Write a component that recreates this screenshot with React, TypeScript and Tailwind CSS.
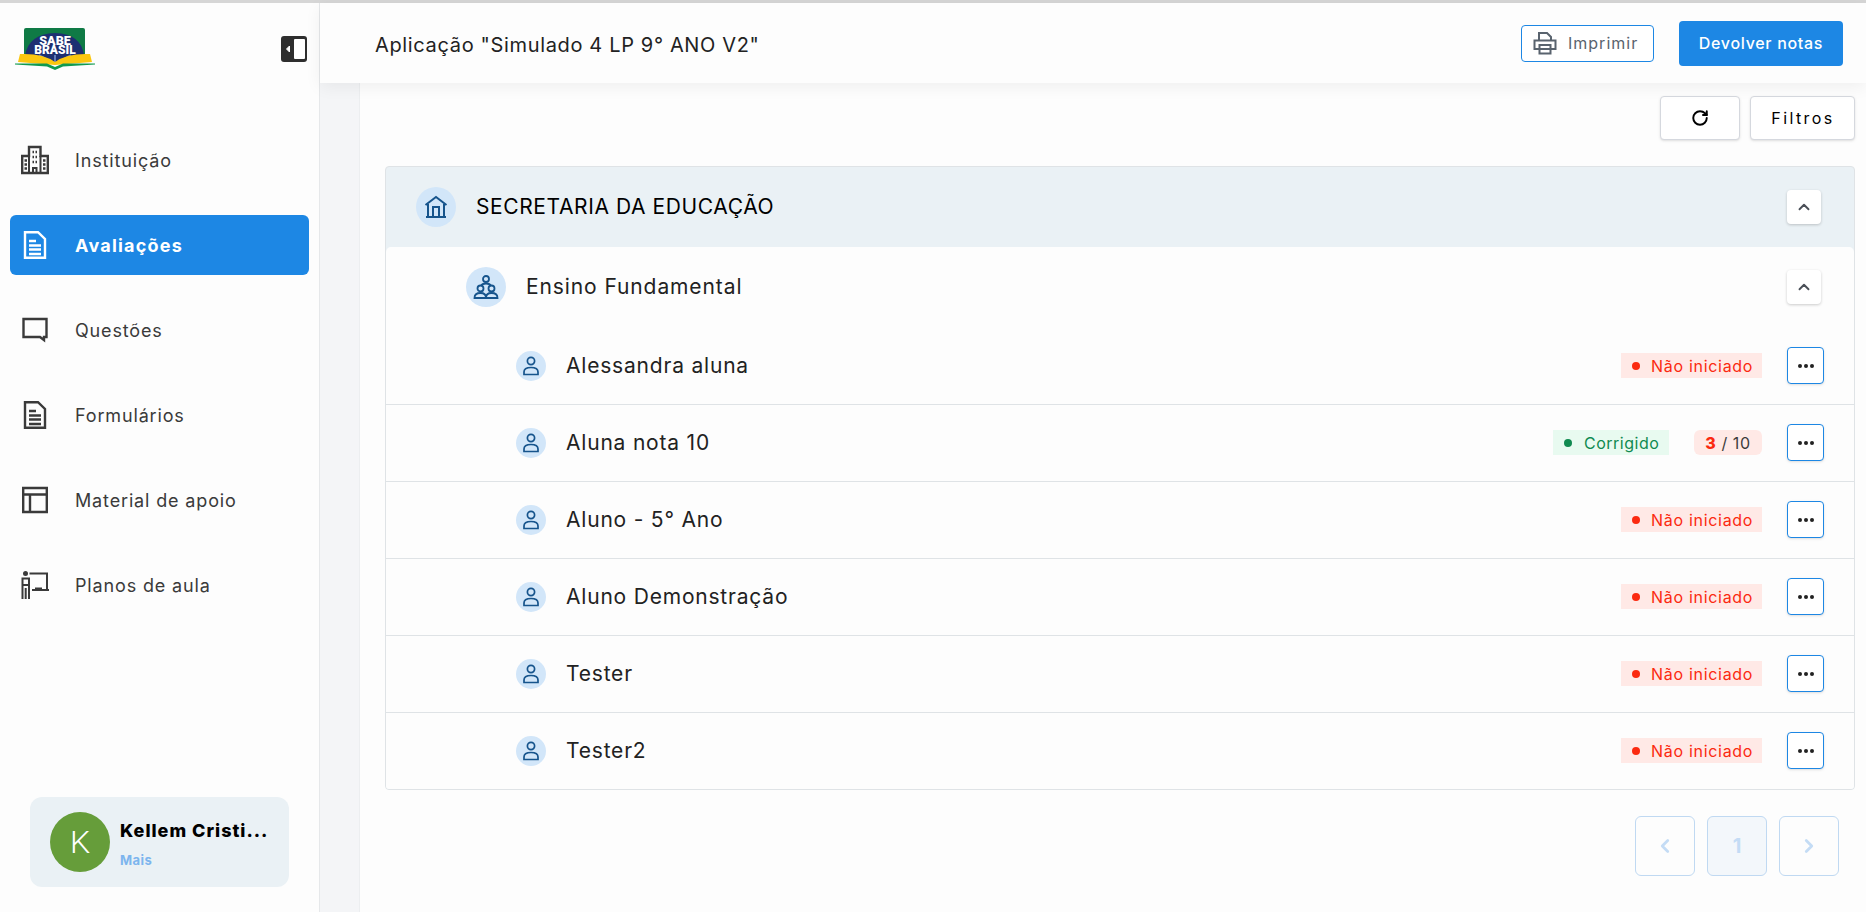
import { ChevronLeft, ChevronRight, ChevronUp, RotateCw } from "lucide-react";

function Logo() {
  return (
    <svg width="80" height="42" viewBox="0 0 80 42">
      <path d="M9 2 Q9 0 11 0 H68 Q70 0 70 2 V28 H9 Z" fill="#0f7a45" />
      <path d="M10 28 Q13 6 40 5 Q67 6 69 28 L40 35 Z" fill="#1d2f72" />
      <path d="M40 36 L24 27 M40 36 L56 27 M40 36 V27" stroke="#5f79b8" strokeWidth="2" />
      <text textAnchor="middle" fontFamily="Roboto, sans-serif" fontWeight="900" fontSize="12.5" fill="#fff">
        <tspan x="40" y="17">SABE</tspan>
        <tspan x="40" y="26" fontSize="12">BRASIL</tspan>
      </text>
      <path d="M3 34 L5 26 Q28 25 40 34 Q52 25 75 26 L77 34 L40 37 Z" fill="#fbc70f" />
      <path d="M0 35.5 L32 35.5 L40 39 L48 35.5 L80 35.5 L80 36.5 L48 38.5 L40 42 L32 38.5 L0 36.5 Z" fill="#109a4f" />
    </svg>
  );
}

function SidebarToggle() {
  return (
    <svg width="26" height="26" viewBox="0 0 26 26">
      <rect width="26" height="26" rx="3" fill="#2e2e2e" />
      <rect x="13" y="3" width="11" height="20" rx="1" fill="#fff" />
      <path d="M8.5 10 L5.5 13 L8.5 16 Z" fill="#fff" stroke="#fff" strokeWidth="1" />
    </svg>
  );
}

function NavIcon({ name }: { name: string }) {
  const common = { width: 30, height: 30, viewBox: "0 0 30 30", fill: "none", stroke: "currentColor", strokeWidth: 2.4 };
  if (name === "building") {
    return (
      <svg {...common}>
        <path d="M2.2 28 V11 H9 V2 H20.5 V11 H27.8 V28 Z" />
        <path d="M9 11 V28 M20.5 11 V28 M13 28 V23 H16.5 V28" strokeWidth="2" />
        <path d="M4.5 15.5 H7 M4.5 19.5 H7 M4.5 23.5 H7 M23 15.5 H25.5 M23 19.5 H25.5 M23 23.5 H25.5 M12.5 7 H14 M15.5 7 H17 M12.5 12 H14 M15.5 12 H17 M12.5 17 H14 M15.5 17 H17" />
      </svg>
    );
  }
  if (name === "doc") {
    return (
      <svg {...common}>
        <path d="M5 2.2 H18 L25 9 V27.8 H5 Z" />
        <path d="M9 11 H16 M9 15.5 H21 M9 19.5 H21 M9 24 H21" />
      </svg>
    );
  }
  if (name === "chat") {
    return (
      <svg {...common}>
        <path d="M3.5 4 H26.5 V22 H24 V25 L20 22 H3.5 Z" />
      </svg>
    );
  }
  if (name === "layout") {
    return (
      <svg {...common}>
        <path d="M3.2 3 H26.8 V27 H3.2 Z M3.2 9.5 H26.8 M10 9.5 V27" />
      </svg>
    );
  }
  return (
    <svg {...common} strokeWidth={2}>
      <circle cx="5.5" cy="3.5" r="2.5" fill="currentColor" stroke="none" />
      <path d="M2.5 29 V8.5 H9 V29 M5.7 18 V29 M2.5 15 H9" />
      <path d="M9.5 3.5 H27 V20 M29 20 H12" />
      <path d="M15 18.5 H22" />
    </svg>
  );
}

function HomeIcon() {
  return (
    <svg width="24" height="24" viewBox="0 0 24 24" fill="none" stroke="#16548c" strokeWidth="2">
      <path d="M1.5 10 L12 2 L22.5 10 M4 9 V22 H20 V9 M9 22 V12 H15 V22 M2 22 H22" />
    </svg>
  );
}

function GroupIcon() {
  return (
    <svg width="26" height="26" viewBox="0 0 26 26" fill="none" stroke="#16548c" strokeWidth="1.8">
      <circle cx="13" cy="5" r="3" />
      <path d="M8 12 Q9 9.5 13 9.5 Q17 9.5 18 12" />
      <circle cx="7.5" cy="14.5" r="3" />
      <circle cx="18.5" cy="14.5" r="3" />
      <path d="M1.5 24 Q1.5 19 7.5 19 Q13 19 13 24 Z M13 24 Q13 19 18.5 19 Q24.5 19 24.5 24 Z" />
    </svg>
  );
}

function PersonIcon() {
  return (
    <svg width="18" height="20" viewBox="0 0 18 20" fill="none" stroke="#16548c" strokeWidth="1.7">
      <circle cx="9" cy="5" r="3.6" />
      <path d="M2 18.5 V16 Q2 11.5 9 11.5 Q16 11.5 16 16 V18.5 Z" />
    </svg>
  );
}

function PrinterIcon() {
  return (
    <svg width="24" height="24" viewBox="0 0 24 24" fill="none" stroke="#59636e" strokeWidth="2">
      <path d="M6 9 V2 H14 L18 6 V9" />
      <path d="M6 18 H1.5 V9.5 H22.5 V18 H18" />
      <path d="M6.5 14 H17.5 V22.5 H6.5 Z M6.5 18 H17.5" />
    </svg>
  );
}

function StatusBadge({ done }: { done?: boolean }) {
  if (done) {
    return (
      <span className="flex h-[25px] w-[116px] items-center bg-[#e8faf0] pl-[11px] text-[16px] tracking-[0.5px] text-[#108a50]">
        <span className="mr-[12px] h-2 w-2 rounded-full bg-[#108a50]" />
        Corrigido
      </span>
    );
  }
  return (
    <span className="flex h-[25px] w-[141px] items-center bg-[#ffe9e6] pl-[11px] text-[16px] tracking-[0.7px] text-[#fb2a10]">
      <span className="mr-[11px] h-2 w-2 rounded-full bg-[#fb2a10]" />
      Não iniciado
    </span>
  );
}

function StudentRow({ name, score, last }: { name: string; score?: boolean; last?: boolean }) {
  return (
    <div className={`flex items-center pb-[1px] pl-[130px] pr-[30px] ${last ? "h-[76px]" : "h-[77px] border-b border-[#dfe3e6]"}`}>
      <span className="flex h-[30px] w-[30px] items-center justify-center rounded-full bg-[#d2e6f9]">
        <PersonIcon />
      </span>
      <span className="ml-5 flex-1 text-[21px] tracking-[0.8px] text-[#222222]">{name}</span>
      <StatusBadge done={score} />
      {score && (
        <span className="ml-[25px] flex h-[25px] w-[68px] items-center justify-center rounded-md bg-[#ffe9e6] text-[16px] tracking-[0.6px] text-[#3c3c3c]">
          <b className="mr-[5px] font-extrabold text-[#fb2a10]">3</b>/ 10
        </span>
      )}
      <button className="ml-[25px] flex h-[37px] w-[37px] items-center justify-center rounded-[4px] border border-[#1d87e4] bg-white shadow-sm">
        <span className="flex gap-[2px]">
          <i className="h-1 w-1 rounded-full bg-[#222222]" />
          <i className="h-1 w-1 rounded-full bg-[#222222]" />
          <i className="h-1 w-1 rounded-full bg-[#222222]" />
        </span>
      </button>
    </div>
  );
}

function CollapseButton() {
  return (
    <button className="flex h-[34px] w-[34px] items-center justify-center rounded-[4px] bg-white shadow-[0_1px_3px_rgba(0,0,0,0.2)]">
      <ChevronUp size={18} strokeWidth={2.5} className="text-[#4a4f57]" />
    </button>
  );
}

const navItems = [
  { label: "Instituição", icon: "building" },
  { label: "Avaliações", icon: "doc", active: true },
  { label: "Questões", icon: "chat" },
  { label: "Formulários", icon: "doc" },
  { label: "Material de apoio", icon: "layout" },
  { label: "Planos de aula", icon: "teacher" },
];

const students = ["Alessandra aluna", "Aluna nota 10", "Aluno - 5° Ano", "Aluno Demonstração", "Tester", "Tester2"];

export default function App() {
  return (
    <div className="flex h-[912px] flex-col overflow-hidden bg-[#fdfdfd] font-['Inter',sans-serif] text-[#222222]">
      <div className="h-[3px] bg-[#d6d6d6]" />
      <div className="flex min-h-0 flex-1">
        <aside className="flex w-[320px] shrink-0 flex-col border-r border-[#e6e8ea] bg-[#fdfdfd]">
          <div className="flex h-[68px] items-start justify-between pl-[15px] pr-[12px] pt-[25px]">
            <Logo />
            <div className="pt-[8px]">
              <SidebarToggle />
            </div>
          </div>
          <nav className="mt-[59px] flex flex-col gap-[25px] px-[10px]">
            {navItems.map((item) => (
              <a
                key={item.label}
                className={`flex h-[60px] items-center rounded-md pl-[10px] text-[18px] ${
                  item.active ? "bg-[#1d87e4] font-bold tracking-[1.2px] text-white" : "tracking-[0.85px] text-[#3a3a3a]"
                }`}
              >
                <NavIcon name={item.icon} />
                <span className="ml-[25px]">{item.label}</span>
              </a>
            ))}
          </nav>
          <div className="mt-auto mb-[25px] ml-[30px] flex h-[90px] w-[259px] items-center rounded-xl bg-[#eaf1f5] pl-5">
            <span className="flex h-[60px] w-[60px] items-center justify-center rounded-full bg-[#669d3a] font-['Roboto',sans-serif] text-[32px] font-light text-white">
              K
            </span>
            <div className="ml-[10px] pt-[4px]">
              <div className="whitespace-nowrap text-[18px] font-extrabold tracking-[1px] text-black">Kellem Cristi...</div>
              <div className="mt-[7px] text-[13px] font-bold tracking-[0.4px] text-[#7cb5ee]">Mais</div>
            </div>
          </div>
        </aside>

        <div className="flex min-w-0 flex-1 flex-col">
          <header className="relative z-10 flex h-[80px] shrink-0 items-center bg-[#fdfdfd] pl-[55px] pr-[23px] shadow-[0_4px_16px_rgba(0,0,0,0.06)]">
            <h1 className="flex-1 pt-[3px] text-[20px] font-normal tracking-[0.65px] text-[#222222]">Aplicação "Simulado 4 LP 9° ANO V2"</h1>
            <button className="flex h-[37px] w-[133px] items-center gap-[11px] rounded-[4px] border border-[#1d87e4] bg-white pl-[11px] text-[16px] tracking-[1px] text-[#59636e]">
              <PrinterIcon />
              Imprimir
            </button>
            <button className="ml-[25px] h-[45px] w-[164px] rounded-[4px] bg-[#1d87e4] text-[16px] font-medium tracking-[0.7px] text-white">
              Devolver notas
            </button>
          </header>

          <div className="flex min-h-0 flex-1">
            <div className="w-[40px] shrink-0 border-r border-[#eceef0] bg-[#f4f5f7]" />
            <main className="min-w-0 flex-1 pl-[25px] pr-[11px]">
              <div className="flex justify-end gap-[10px] pt-[13px]">
                <button className="flex h-[44px] w-[80px] items-center justify-center rounded-[4px] border border-[#d5d8de] bg-white shadow-sm">
                  <RotateCw size={18} strokeWidth={2.6} className="text-black" />
                </button>
                <button className="h-[44px] w-[105px] rounded-[4px] border border-[#d5d8de] bg-white pl-[1px] text-[16px] tracking-[2.4px] text-black shadow-sm">
                  Filtros
                </button>
              </div>

              <section className="mt-[26px] overflow-hidden rounded-[4px] border border-[#dfe3e6] bg-[#eaf1f5]">
                <div className="flex h-[80px] items-center pl-[30px] pr-[33px]">
                  <span className="flex h-10 w-10 items-center justify-center rounded-full bg-[#d2e6f9]">
                    <HomeIcon />
                  </span>
                  <span className="ml-5 flex-1 text-[21px] tracking-[0.6px] text-black">SECRETARIA DA EDUCAÇÃO</span>
                  <CollapseButton />
                </div>
                <div className="rounded-t-[5px] bg-[#fdfdfd]">
                  <div className="flex h-[81px] items-center pb-[1px] pl-[80px] pr-[33px]">
                    <span className="flex h-10 w-10 items-center justify-center rounded-full bg-[#d2e6f9]">
                      <GroupIcon />
                    </span>
                    <span className="ml-5 flex-1 text-[21px] tracking-[0.9px] text-[#222222]">Ensino Fundamental</span>
                    <CollapseButton />
                  </div>
                  {students.map((name, i) => (
                    <StudentRow key={name} name={name} score={i === 1} last={i === students.length - 1} />
                  ))}
                </div>
              </section>

              <div className="mt-[26px] flex justify-end gap-3 pr-[16px]">
                <button className="flex h-[60px] w-[60px] items-center justify-center rounded-md border border-[#c0d9f2]">
                  <ChevronLeft size={22} strokeWidth={3} className="text-[#c4dcf5]" />
                </button>
                <button className="h-[60px] w-[60px] rounded-md border border-[#c0d9f2] bg-[#f3f7fb] text-[20px] font-bold text-[#c4dcf5]">
                  1
                </button>
                <button className="flex h-[60px] w-[60px] items-center justify-center rounded-md border border-[#c0d9f2]">
                  <ChevronRight size={22} strokeWidth={3} className="text-[#c4dcf5]" />
                </button>
              </div>
            </main>
          </div>
        </div>
      </div>
    </div>
  );
}
